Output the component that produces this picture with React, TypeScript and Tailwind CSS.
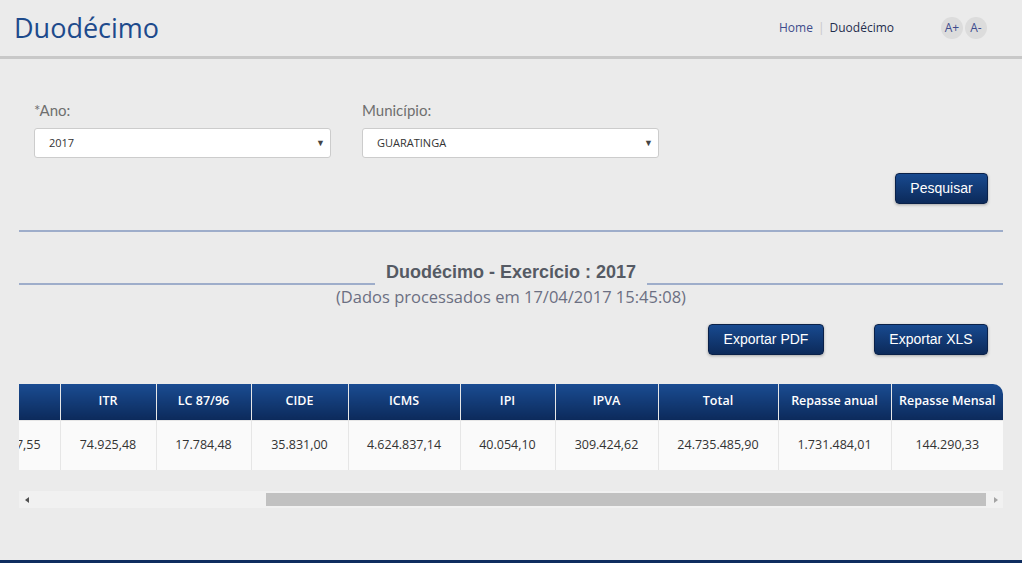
import React from "react";

const cols = [
  { h: "Município", v: "GUARATINGA", w: 237 },
  { h: "FPM", v: "19.632.617,55", w: 120 },
  { h: "ITR", v: "74.925,48", w: 96 },
  { h: "LC 87/96", v: "17.784,48", w: 95 },
  { h: "CIDE", v: "35.831,00", w: 97 },
  { h: "ICMS", v: "4.624.837,14", w: 112 },
  { h: "IPI", v: "40.054,10", w: 95 },
  { h: "IPVA", v: "309.424,62", w: 103 },
  { h: "Total", v: "24.735.485,90", w: 120 },
  { h: "Repasse anual", v: "1.731.484,01", w: 113 },
  { h: "Repasse Mensal", v: "144.290,33", w: 112 },
];

function Select({ value }: { value: string }) {
  return (
    <div className="w-[297px] h-[30px] bg-white border border-[#cccccc] rounded-[3px] flex items-center justify-between pl-[14px] pr-[5px] text-[11px] text-[#333] font-['Open_Sans',sans-serif]">
      <span>{value}</span>
      <span className="text-[9px] text-[#444]">▼</span>
    </div>
  );
}

function Btn({ children, w }: { children: React.ReactNode; w: string }) {
  return (
    <button
      className={`${w} h-[31px] rounded-[4px] border border-[#0a2149] bg-gradient-to-b from-[#184a90] to-[#0c2a5a] text-white text-[14px] font-['Liberation_Sans',Arial,sans-serif] shadow-[0_1px_3px_rgba(0,0,0,0.3)]`}
    >
      {children}
    </button>
  );
}

export default function App() {
  return (
    <div className="w-[1022px] h-[563px] bg-[#ebebeb] flex flex-col overflow-hidden font-['Open_Sans',sans-serif]">
      <header className="h-[59px] border-b-[3px] border-[#c8c8c8] flex items-start justify-between shrink-0">
        <h1 className="ml-[14px] mt-[8px] text-[27px] leading-[40px] text-[#1d4a8c] font-normal">
          Duodécimo
        </h1>
        <div className="flex items-center mt-[17px] mr-[35px]">
          <div className="flex items-center text-[12px] mr-[47px]">
            <span className="text-[#3d4b8c]">Home</span>
            <span className="text-[#c8c8c8] mx-[5px]">|</span>
            <span className="text-[#1f2d4d]">Duodécimo</span>
          </div>
          <div className="flex gap-[2px]">
            <span className="w-[22px] h-[22px] rounded-full bg-[#dcdcdc] text-[#3d4b8c] text-[12px] flex items-center justify-center">
              A+
            </span>
            <span className="w-[22px] h-[22px] rounded-full bg-[#dcdcdc] text-[#3d4b8c] text-[12px] flex items-center justify-center">
              A-
            </span>
          </div>
        </div>
      </header>

      <main className="flex-1 flex flex-col px-[19px]">
        <div className="flex gap-[31px] ml-[15px] mt-[41px]">
          <div className="flex flex-col">
            <label className="text-[15px] leading-[20px] text-[#6f6f6f] font-['Lato',sans-serif] mb-[8px]">
              *Ano:
            </label>
            <Select value="2017" />
          </div>
          <div className="flex flex-col">
            <label className="text-[15px] leading-[20px] text-[#6f6f6f] font-['Lato',sans-serif] mb-[8px]">
              Município:
            </label>
            <Select value="GUARATINGA" />
          </div>
        </div>

        <div className="flex justify-end mt-[15px] mr-[15px]">
          <Btn w="w-[93px]">Pesquisar</Btn>
        </div>

        <div className="h-[2px] bg-[#9eadca] mt-[26px]" />

        <div className="flex items-center mt-[27px]">
          <div className="flex-1 h-[2px] bg-[#9eadca] mt-[24px]" />
          <h2 className="px-[11px] text-[18px] font-bold text-[#555a64] font-['Liberation_Sans',Arial,sans-serif] leading-[20px]">
            Duodécimo - Exercício : 2017
          </h2>
          <div className="flex-1 h-[2px] bg-[#9eadca] mt-[24px]" />
        </div>
        <p className="text-center text-[16.5px] leading-[22px] text-[#6b6f82] mt-[1px]">
          (Dados processados em 17/04/2017 15:45:08)
        </p>

        <div className="flex justify-end gap-[50px] mt-[16px] mr-[15px]">
          <Btn w="w-[116px]">Exportar PDF</Btn>
          <Btn w="w-[114px]">Exportar XLS</Btn>
        </div>

        <div className="mt-[29px] w-[984px] flex flex-col">
          <div className="w-[984px] overflow-hidden flex justify-end">
            <table className="border-collapse shrink-0 text-[13px]" style={{ width: 1300 }}>
              <thead>
                <tr>
                  {cols.map((c, i) => (
                    <th
                      key={c.h}
                      style={{ width: c.w, minWidth: c.w }}
                      className={`h-[36px] bg-gradient-to-b from-[#1a4c92] to-[#0c2a5b] text-white font-semibold text-[12.5px] text-center border-l border-[#e8e8e8] first:border-l-0 ${
                        i === cols.length - 1 ? "rounded-tr-[10px]" : ""
                      }`}
                    >
                      {c.h}
                    </th>
                  ))}
                </tr>
              </thead>
              <tbody>
                <tr>
                  {cols.map((c) => (
                    <td
                      key={c.h}
                      className="h-[50px] bg-[#fafafa] text-[#333] text-[12.5px] text-center border-l border-t border-[#e6e6e6] first:border-l-0"
                    >
                      {c.v}
                    </td>
                  ))}
                </tr>
              </tbody>
            </table>
          </div>

          <div className="mt-[21px] h-[17px] bg-[#f1f1f1] flex items-center">
            <div className="w-[15px] h-full flex items-center justify-center">
              <span className="w-0 h-0 border-y-[3px] border-y-transparent border-r-[4px] border-r-[#505050]" />
            </div>
            <div className="flex-1 h-[13px] flex">
              <div className="w-[232px]" />
              <div className="w-[720px] h-full bg-[#c1c1c1]" />
            </div>
            <div className="w-[15px] h-full flex items-center justify-center">
              <span className="w-0 h-0 border-y-[3px] border-y-transparent border-l-[4px] border-l-[#a3a3a3]" />
            </div>
          </div>
        </div>
      </main>

      <div className="h-[3px] bg-[#0f2d5f] shrink-0" />
    </div>
  );
}
